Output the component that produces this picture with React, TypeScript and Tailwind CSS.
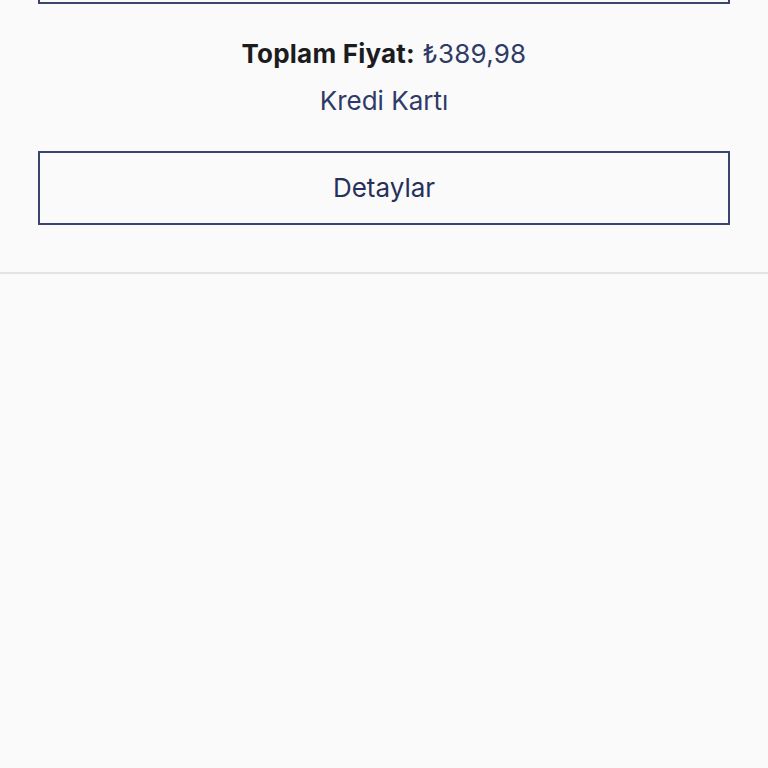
export default function App() {
  return (
    <div className="min-h-[768px] bg-[#fafafa] font-['Inter','Noto_Sans',sans-serif] overflow-hidden">
      <div className="px-[38px]">
        <div className="h-[40px] -mt-[36px] border-2 border-[#3a4470]" />
      </div>

      <div className="flex flex-col items-center pt-[34px]">
        <p className="text-[26px] leading-[32px] tracking-[0.2px] text-[#1c1c1e]">
          <span className="font-bold">Toplam Fiyat:</span>{' '}
          <span className="text-[#2f3a66]">₺389,98</span>
        </p>
        <p className="mt-[15px] text-[26px] leading-[32px] text-[#2f3a66]">Kredi Kartı</p>
      </div>

      <div className="px-[38px] pt-[34px] pb-[47px] border-b-2 border-[#e3e3e3]">
        <button className="w-full h-[74px] pb-[2px] border-2 border-[#3a4470] bg-transparent text-[26px] text-[#27305a]">
          Detaylar
        </button>
      </div>
    </div>
  )
}
